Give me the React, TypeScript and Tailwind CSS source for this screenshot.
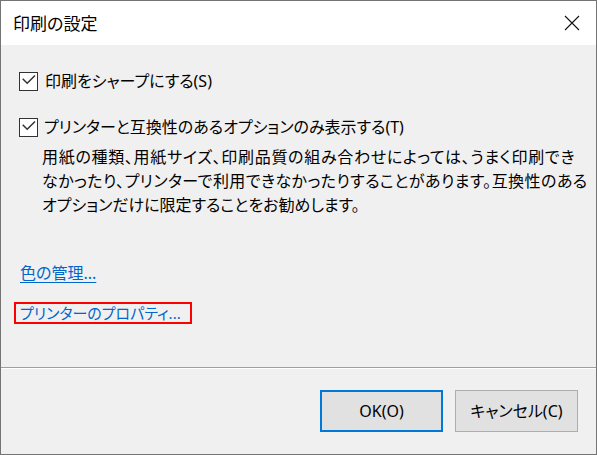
import React from "react";

function Check() {
  return (
    <div className="w-[19px] h-[19px] border border-[#333333] bg-white shrink-0 flex">
      <svg width="17" height="17" viewBox="0 0 17 17">
        <polyline points="2.7,5.8 7.2,10.3 15,2.5" fill="none" stroke="#333333" strokeWidth="1.5" />
      </svg>
    </div>
  );
}

export default function App() {
  return (
    <div className="w-[597px] h-[455px] border border-[#747474] flex flex-col font-['Noto_Sans','Noto_Sans_CJK_JP',sans-serif] text-black [font-feature-settings:'palt'] overflow-hidden">
      <div className="h-[44px] bg-white flex items-center justify-between pl-[12px] pr-[16px] shrink-0">
        <span className="text-[17px] leading-none">印刷の設定</span>
        <svg width="16" height="16" viewBox="0 0 16 16">
          <path d="M1 1 L15 15 M15 1 L1 15" stroke="#111" strokeWidth="1.1" />
        </svg>
      </div>
      <div className="flex-1 bg-[#f0f0f0] flex flex-col">
        <div className="h-[322px] pl-[18px] flex flex-col shrink-0">
          <div className="mt-[25px] h-[22px] flex items-center gap-[7px]">
            <Check />
            <span className="text-[16px] leading-[22px]">印刷をシャープにする(S)</span>
          </div>
          <div className="mt-[24px] h-[22px] flex items-center gap-[6px]">
            <Check />
            <span className="text-[16px] leading-[22px]">プリンターと互換性のあるオプションのみ表示する(T)</span>
          </div>
          <div className="mt-[7px] ml-[23px] text-[16px] leading-[24px]">
            <div className="tracking-[0.7px] whitespace-nowrap">用紙の種類、用紙サイズ、印刷品質の組み合わせによっては、うまく印刷でき</div>
            <div className="tracking-[0.45px] whitespace-nowrap">なかったり、プリンターで利用できなかったりすることがあります。互換性のある</div>
            <div className="whitespace-nowrap">オプションだけに限定することをお勧めします。</div>
          </div>
          <div className="mt-[45px] h-[22px] flex items-center ml-[1px]">
            <span className="text-[16px] leading-[20px] text-[#0066cc] underline underline-offset-[3px] decoration-1">色の管理...</span>
          </div>
          <div className="mt-[18px] -ml-[5px] w-[178px] h-[22px] border-2 border-[#ff0000] flex items-center pl-[4px]">
            <span className="text-[15px] leading-[18px] text-[#0066cc] whitespace-nowrap">プリンターのプロパティ...</span>
          </div>
        </div>
        <div className="h-px bg-[#a0a0a0] shrink-0" />
        <div className="h-px bg-white shrink-0" />
        <div className="flex-1 flex justify-end items-start pt-[21px] pr-[18px] gap-[12px]">
          <button className="w-[123px] h-[42px] bg-[#e1e1e1] border-2 border-[#0078d7] text-[16px] flex items-center justify-center">
            OK(O)
          </button>
          <button className="w-[123px] h-[42px] bg-[#e1e1e1] border border-[#adadad] text-[16px] flex items-center justify-center">
            キャンセル(C)
          </button>
        </div>
      </div>
    </div>
  );
}
